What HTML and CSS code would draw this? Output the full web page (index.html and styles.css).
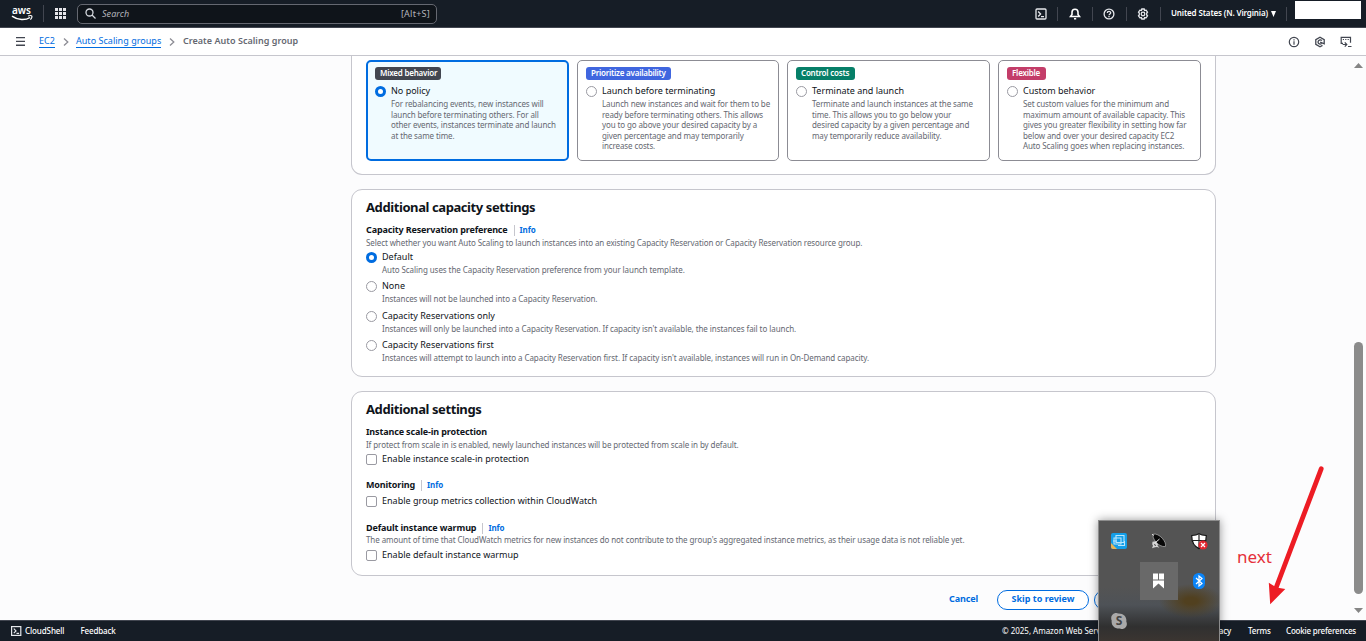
FILE: index.html
```html
<!DOCTYPE html>
<html lang="en">
<head>
<meta charset="utf-8">
<title>Create Auto Scaling group</title>
<link rel="stylesheet" href="styles.css">
</head>
<body>
<header class="topnav">
  <svg class="logo" width="22" height="18" viewBox="0 -2 22 18"><text x="0" y="6.700" class="logo-text" textLength="19" lengthAdjust="spacingAndGlyphs">aws</text><path d="M0 9.200c6 4.300 13.500 4.300 18 1.300" fill="none" stroke="#fff" stroke-width="1.500"/><path d="M16 9c1.800-.5 3.500-.5 3.800 0s-.2 2.300-1.400 3.600" fill="none" stroke="#fff" stroke-width="1.100"/></svg>
  <span class="sep sep-logo"></span>
  <svg class="grid-icon" width="11" height="11" viewBox="0 0 11 11" fill="#e6e6ea"><path d="M0 0h3v3H0zM4 0h3v3H4zM8 0h3v3H8zM0 4h3v3H0zM4 4h3v3H4zM8 4h3v3H8zM0 8h3v3H0zM4 8h3v3H4zM8 8h3v3H8z"/></svg>
  <div class="search">
    <svg width="11" height="11" viewBox="0 0 11 11" fill="none" stroke="#d5d9df" stroke-width="1.300"><circle cx="4.500" cy="4.500" r="3.500"/><path d="M7 7l3.500 3.500"/></svg>
    <span class="search-ph">Search</span><span class="search-key">[Alt+S]</span>
  </div>
  <div class="tools">
    <svg class="tool-shell" width="12" height="12" viewBox="0 0 12 12" fill="none" stroke="#e6e8ec" stroke-width="1.300"><rect x="1" y="1" width="10" height="10" rx="1"/><path d="M3.200 3.500L5.600 6 3.200 8.500M6 8.600h3"/></svg>
    <span class="sep"></span>
    <svg width="12" height="12" viewBox="0 0 12 12" fill="none" stroke="#fff" stroke-width="1.600"><path d="M1.500 8.500h9L9 6.500V4.300C9 2.500 7.700 1.300 6 1.300S3 2.500 3 4.300v2.200zM5 10.700h2.200"/></svg>
    <span class="sep"></span>
    <svg width="12" height="12" viewBox="0 0 12 12" fill="none" stroke="#e6e8ec" stroke-width="1.300"><circle cx="6" cy="6" r="4.900"/><path d="M4.300 4.900C4.300 3 7.700 3 7.700 4.800 7.700 6 6 5.900 6 7.300M6 8.100v1.100"/></svg>
    <span class="sep"></span>
    <svg width="12" height="12" viewBox="0 0 12 12" fill="none" stroke="#e6e8ec" stroke-width="1.300"><path d="M4.800 1h2.400l.4 1.400 1.500-.3 1.400 2L9.700 5v2l.8.9-1.400 2-1.500-.3L7.200 11H4.800l-.4-1.400-1.500.3-1.400-2 .8-.9V5l-.8-.9 1.400-2 1.500.3z"/><circle cx="6" cy="6" r="1.800"/></svg>
    <span class="sep"></span>
  </div>
  <span class="region">United States (N. Virginia)</span>
  <svg class="caret" width="5" height="6" viewBox="0 0 5 6" fill="#fff"><path d="M0 0h5L2.500 6z"/></svg>
  <span class="sep"></span>
  <span class="account"></span>
</header>
<nav class="crumbs">
  <svg class="menu" width="9" height="9" viewBox="0 0 9 9" fill="#424650"><path d="M0 0h9v1.300H0zM0 3.800h9v1.300H0zM0 7.600h9v1.300H0z"/></svg>
  <a class="crumb crumb-ec2">EC2</a>
  <svg class="chev" width="6" height="8" viewBox="0 0 6 8" fill="none" stroke="#8c8c94" stroke-width="1.300"><path d="M1 .5L4.800 4 1 7.500"/></svg>
  <a class="crumb crumb-asg">Auto Scaling groups</a>
  <svg class="chev" width="6" height="8" viewBox="0 0 6 8" fill="none" stroke="#8c8c94" stroke-width="1.300"><path d="M1 .5L4.800 4 1 7.500"/></svg>
  <span class="crumb-now">Create Auto Scaling group</span>
  <div class="crumb-tools">
    <svg width="12" height="12" viewBox="0 0 12 12" fill="none" stroke="#424650" stroke-width="1.200"><circle cx="6" cy="6" r="4.700"/><path d="M6 5.200v3.500M6 3.200v1.200"/></svg>
    <svg width="12" height="12" viewBox="0 0 12 12" fill="none" stroke="#424650" stroke-width="1.300"><path d="M8.500 9.400L6 10.800 1.800 8.400V3.600L6 1.200l4.200 2.400v4.200L6.200 6.100"/><path d="M7.800 4.700A2.100 2.100 0 1 0 7.700 7.400"/></svg>
    <svg width="12" height="12" viewBox="0 0 12 12" fill="none" stroke="#424650" stroke-width="1.200"><path d="M3 7.300H1.200V1.300h9.300v5.400M2.800 3.500h1.200M5.200 3.500h1.200M7.600 3.500h1.200M2.600 8.500h4M4.800 6.300L6.800 8.500 4.800 10.700M8 10.500h3.500"/></svg>
  </div>
</nav>
<main class="page">
  <section class="panel panel-tiles">
    <div class="tile selected">
      <span class="badge badge-mixed">Mixed behavior</span>
      <div class="tile-label"><i class="radio on"></i>No policy</div>
      <p class="tile-desc">For rebalancing events, new instances will<br>launch before terminating others. For all<br>other events, instances terminate and launch<br>at the same time.</p>
    </div>
    <div class="tile">
      <span class="badge badge-avail">Prioritize availability</span>
      <div class="tile-label"><i class="radio"></i>Launch before terminating</div>
      <p class="tile-desc">Launch new instances and wait for them to be<br>ready before terminating others. This allows<br>you to go above your desired capacity by a<br>given percentage and may temporarily<br>increase costs.</p>
    </div>
    <div class="tile">
      <span class="badge badge-cost">Control costs</span>
      <div class="tile-label"><i class="radio"></i>Terminate and launch</div>
      <p class="tile-desc">Terminate and launch instances at the same<br>time. This allows you to go below your<br>desired capacity by a given percentage and<br>may temporarily reduce availability.</p>
    </div>
    <div class="tile">
      <span class="badge badge-flex">Flexible</span>
      <div class="tile-label"><i class="radio"></i>Custom behavior</div>
      <p class="tile-desc">Set custom values for the minimum and<br>maximum amount of available capacity. This<br>gives you greater flexibility in setting how far<br>below and over your desired capacity EC2<br>Auto Scaling goes when replacing instances.</p>
    </div>
  </section>
  <section class="panel panel-capacity">
    <h2>Additional capacity settings</h2>
    <div class="field"><b>Capacity Reservation preference</b><a class="info">Info</a></div>
    <p class="desc">Select whether you want Auto Scaling to launch instances into an existing Capacity Reservation or Capacity Reservation resource group.</p>
    <div class="choices">
      <div class="choice"><i class="radio on"></i><span class="opt">Default</span><p class="desc">Auto Scaling uses the Capacity Reservation preference from your launch template.</p></div>
      <div class="choice"><i class="radio"></i><span class="opt">None</span><p class="desc">Instances will not be launched into a Capacity Reservation.</p></div>
      <div class="choice"><i class="radio"></i><span class="opt">Capacity Reservations only</span><p class="desc">Instances will only be launched into a Capacity Reservation. If capacity isn't available, the instances fail to launch.</p></div>
      <div class="choice"><i class="radio"></i><span class="opt">Capacity Reservations first</span><p class="desc">Instances will attempt to launch into a Capacity Reservation first. If capacity isn't available, instances will run in On-Demand capacity.</p></div>
    </div>
  </section>
  <section class="panel panel-settings">
    <h2>Additional settings</h2>
    <div class="field"><b>Instance scale-in protection</b></div>
    <p class="desc">If protect from scale in is enabled, newly launched instances will be protected from scale in by default.</p>
    <div class="check-row"><i class="check"></i><span class="opt">Enable instance scale-in protection</span></div>
    <div class="field field-next"><b>Monitoring</b><a class="info">Info</a></div>
    <div class="check-row check-gap"><i class="check"></i><span class="opt">Enable group metrics collection within CloudWatch</span></div>
    <div class="field field-last"><b>Default instance warmup</b><a class="info">Info</a></div>
    <p class="desc desc-last">The amount of time that CloudWatch metrics for new instances do not contribute to the group's aggregated instance metrics, as their usage data is not reliable yet.</p>
    <div class="check-row check-gap"><i class="check"></i><span class="opt">Enable default instance warmup</span></div>
  </section>
  <div class="actions"><a class="cancel">Cancel</a><a class="btn">Skip to review</a><a class="btn btn-prev">Previous</a></div>
  <div class="scrollbar">
    <svg width="9" height="5" viewBox="0 0 9 5" fill="#858585"><path d="M0 5L4.500 0 9 5z"/></svg>
    <span class="thumb"></span>
    <svg width="9" height="5" viewBox="0 0 9 5" fill="#858585"><path d="M0 0l4.500 5L9 0z"/></svg>
  </div>
</main>
<footer class="footer">
  <svg width="11" height="10" viewBox="0 0 11 10" fill="none" stroke="#e6e8ec" stroke-width="1.200"><rect x=".6" y=".6" width="9.200" height="8.800"/><path d="M2.800 2.600L5 4.900 2.800 7.200M5.500 7.300h2.600"/></svg>
  <span class="f-shell">CloudShell</span><span class="f-feed">Feedback</span>
  <span class="f-copy">© 2025, Amazon Web Services</span><span class="f-priv">Privacy</span><span class="f-terms">Terms</span><span class="f-cookie">Cookie preferences</span>
</footer>
<div class="tray">
  <span class="cell"><svg width="16" height="16" viewBox="0 0 16 16"><rect width="16" height="16" rx="2" fill="#149ee7"/><path d="M0 10l6 6H2a2 2 0 0 1-2-2z" fill="#e8b352"/><path d="M5 2.500h8v7H5zM3 5h7v6H3zM2 8h4M7 12.500h6.500V8" fill="none" stroke="#b9e6fb" stroke-width="1.100"/></svg></span>
  <span class="cell"><svg width="16" height="16" viewBox="0 0 16 16"><path d="M2.200 1.200C.6 5 7 14.200 14.300 13.600 16.500 9.500 8-.5 2.200 1.200z" fill="#080808" stroke="#a5a5a5" stroke-width=".8"/><path d="M1 1.200l2 1.300" stroke="#ddd"/><path d="M1.500 8.800l3-.6 2.500 3-.5 1.300 1.800 2.300-2.300-.8-2 .2-3 1 1-2.500-.8-1.500z" fill="#d5d5d5"/><path d="M4.500 9.500L8.500 6" stroke="#fff" stroke-width=".9"/><path d="M3 11.500l2 1" stroke="#444"/></svg></span>
  <span class="cell"><svg width="17" height="17" viewBox="0 0 17 17"><path d="M8 .6C10 2.200 12.500 2.500 15.200 2.500 15.500 9 13.500 13 8 15.600 2.500 13 .5 9 .8 2.500 3.500 2.500 6 2.200 8 .6z" fill="#fff" stroke="#111" stroke-width="1.200"/><path d="M8 1v14M1 7.500h14" stroke="#222" stroke-width="1.200"/><circle cx="12" cy="12" r="4.600" fill="#e32630"/><path d="M10 10l4 4M14 10l-4 4" stroke="#fff" stroke-width="1.200"/></svg></span>
  <span class="cell"></span>
  <span class="cell hover"><svg width="11" height="16" viewBox="0 0 11 16" fill="#fff"><path d="M0 .5h5v6H0zM6 .5h5v6H6zM0 7.500h11v8l-5.500-5-5.500 5z"/></svg></span>
  <span class="cell"><svg width="12" height="16" viewBox="0 0 12 16"><rect width="12" height="16" rx="5.500" fill="#0a84f8"/><path d="M3 5l6 5.500L6 13V3l3 2.500L3 11" fill="none" stroke="#fff" stroke-width="1.200"/></svg></span>
  <span class="cell"><svg width="16" height="16" viewBox="0 0 16 16"><path d="M5 0c1 0 1.500.3 2 .5C12.500 0 16 4 15.300 8.500 17.500 13 13 17.500 9 15.400 3.500 16 0 12 .7 7.500-1 3.500 2 0 5 0z" fill="#a9a9a9"/><text x="8" y="12.200" class="skype" text-anchor="middle">S</text></svg></span>
</div>
<div class="note">next</div>
<svg class="arrow" width="62" height="142" viewBox="1266 464 62 142"><path d="M1321.200 468.800L1276 588" stroke="#ed1c24" stroke-width="4.800" stroke-linecap="round"/><path d="M1270.200 604.300L1268.800 582.700 1276.500 587.500 1285.300 589z" fill="#ed1c24"/></svg>
</body>
</html>
```
FILE: styles.css
```css
* { box-sizing: border-box; }
body { margin: 0; width: 1366px; height: 641px; overflow: hidden; position: relative; font-family: "Noto Sans", "Open Sans", sans-serif; color: #0f141a; background: #fcfcfd; }
svg { display: block; flex: none; }
p, h2 { margin: 0; white-space: nowrap; }
span, a, b { white-space: nowrap; }

.topnav { height: 28px; background: #161d26; border-bottom: 1px solid #424650; display: flex; align-items: center; padding-left: 12px; color: #fff; }
.logo { overflow: visible; }
.logo-text { font: 600 10.500px "Noto Sans", sans-serif; fill: #fff; }
.sep { width: 1px; height: 14px; background: #424650; flex: none; }
.sep-logo { height: 17px; margin: 0 11px 0 9px; }
.search { width: 360px; height: 20px; margin-left: 11px; border: 1px solid #656871; border-radius: 5px; background: #0f141a; display: flex; align-items: center; padding: 0 6px 0 7px; }
.search-ph { font-size: 9px; font-style: italic; color: #b4b4bb; margin-left: 6px; letter-spacing: .05px; }
.search-key { font-size: 9px; color: #b4b4bb; margin-left: auto; letter-spacing: .25px; }
.tools { margin-left: auto; display: flex; align-items: center; gap: 10.600px; }
.region { width: 96px; margin-left: 10px; font-size: 8px; font-weight: 600; line-height: 12px; margin-top: -1px; letter-spacing: -.13px; }
.caret { margin: 0 10px 0 4px; }
.account { width: 66px; height: 18px; margin: -8px 5px 0 8px; background: #fff; }

.crumbs { height: 28px; background: #fff; border-bottom: 1px solid #c6c6cd; display: flex; align-items: center; padding: 0 14px 0 16px; font-size: 9px; }
.crumb { color: #006ce0; height: 12px; line-height: 10px; border-bottom: 1px solid #006ce0; }
.crumb-ec2 { margin-left: 14px; width: 16px; }
.crumb-asg { width: 85px; margin-left: -1px; letter-spacing: .03px; }
.chev { margin: 0 8px; }
.crumb-now { color: #656871; font-weight: 600; height: 12px; line-height: 10px; letter-spacing: .03px; }
.crumb-tools { margin-left: auto; display: flex; gap: 14px; }

.page { position: relative; height: 564px; overflow: hidden; }
.panel { width: 865px; margin: 0 0 14px 351px; padding: 8px 14px 0; background: #fff; border: 1px solid #c6c6cd; border-radius: 11px; }
.panel-tiles { height: 119px; padding: 4px 14px 0; border-top: 0; border-radius: 0 0 11px 11px; display: grid; grid-template-columns: 203px 202px 203px 203px; column-gap: 8px; }
.tile { height: 101px; border: 1px solid #8c8c94; border-radius: 5px; padding: 6px 0 0 8px; }
.tile.selected { border: 2px solid #006ce0; background: #f0fbff; padding: 5px 0 0 7px; }
.badge { display: block; height: 13px; line-height: 12px; border-radius: 3px; padding: 0 5px; color: #fff; font-size: 8px; font-weight: 600; letter-spacing: -.22px; }
.badge-mixed { background: #424650; width: 66px; }
.badge-avail { background: #4066df; width: 85px; }
.badge-cost { background: #067f68; width: 59px; }
.badge-flex { background: #c33d69; width: 39px; }
.tile-label { display: flex; align-items: center; height: 14px; margin-top: 3px; font-size: 9px; gap: 5px; }
.tile-label .radio { margin-top: 3px; }
.tile-desc { padding-left: 16px; margin-top: 2px; font-size: 8px; line-height: 10.550px; color: #656871; letter-spacing: -.11px; }
.radio { width: 11px; height: 11px; border: 1px solid #9a9aa2; border-radius: 50%; background: #fff; flex: none; }
.radio.on { border: 3.500px solid #006ce0; }

.panel-capacity { height: 188px; }
.panel-settings { height: 185px; }
h2 { font-size: 13px; line-height: 20px; height: 20px; margin-top: -1px; font-weight: 700; letter-spacing: -.41px; }
.field { display: flex; align-items: center; height: 14px; margin-top: 6px; font-size: 9px; line-height: 14px; }
.field b { font-weight: 700; letter-spacing: -.14px; }
.info { margin-left: 6px; padding-left: 5px; height: 11px; line-height: 10px; border-left: 1px solid #c6c6cd; color: #006ce0; font-weight: 700; font-size: 8px; letter-spacing: -.1px; }
.desc { font-size: 8px; line-height: 12px; color: #656871; letter-spacing: -.088px; }
.choices { display: grid; grid-auto-rows: 29.330px; margin-top: 1px; }
.choice { display: grid; grid-template-columns: 11px auto; column-gap: 5px; grid-template-rows: 14px 11px; align-items: center; justify-content: start; }
.choice .desc { grid-column: 2; line-height: 11px; letter-spacing: -.07px; }
.opt { font-size: 9px; line-height: 14px; letter-spacing: .01px; }
.choice .radio { margin-top: 1px; }
.check-row { display: flex; align-items: center; height: 14px; margin-top: 1px; gap: 5px; }
.check-gap { margin-top: 2px; }
.field-next { margin-top: 12px; }
.field-last { margin-top: 13px; }
.desc-last { margin-top: -1px; }
.check { width: 11px; height: 11px; margin-top: 1px; border: 1px solid #9a9aa2; border-radius: 2px; background: #fff; }

.actions { display: flex; align-items: center; height: 20px; padding-left: 949px; color: #006ce0; font-size: 9px; font-weight: 700; }
.cancel { width: 48px; height: 14px; line-height: 12px; letter-spacing: -.1px; }
.btn { width: 92px; height: 20px; line-height: 16px; border: 1.500px solid #006ce0; border-radius: 10px; background: #fff; text-align: center; }
.btn-prev { margin-left: 5px; }
.scrollbar { position: absolute; right: 3px; top: 7px; width: 9px; height: 550px; display: flex; flex-direction: column; }
.thumb { height: 252px; margin: 274px 0 14px; border-radius: 5px; background: #8b8b8b; }

.footer { height: 21px; background: #161d26; border-top: 1px solid #424650; display: flex; align-items: center; padding-left: 11px; color: #fff; font-size: 8px; line-height: 12px; font-weight: 500; }
.footer span { margin-top: -1px; }
.footer .f-shell { width: 55.500px; margin: 0 0 0 3px; letter-spacing: -.1px; }
.f-feed { letter-spacing: -.15px; }
.footer .f-copy { margin-left: auto; width: 203px; font-weight: 400; letter-spacing: -.02px; }
.f-priv { width: 43px; letter-spacing: -.2px; }
.f-terms { width: 38px; letter-spacing: -.1px; }
.f-cookie { width: 80px; letter-spacing: -.2px; }

.tray { position: absolute; left: 1098px; top: 520px; width: 122px; height: 121px; border: 1px solid #8c8c8c; border-bottom: 0; box-shadow: 0 0 9px rgba(0,0,0,.4); background: radial-gradient(ellipse 32px 17px at 92px 80px, #51401f 20%, transparent), linear-gradient(#545454 0 55%, #4e5257 70%, #303030 88%, #3b3531); padding: 1px; display: grid; grid-template-columns: repeat(3, 38px); grid-auto-rows: 38px; gap: 2px 2px; }
.cell { display: grid; place-items: center; }
.hover { background: #696969; }
.hover svg { margin-right: 2px; }
.skype { font: 700 12px "Noto Sans", sans-serif; fill: #444; }
.note { position: absolute; left: 1237px; top: 546px; font-size: 17px; line-height: 21px; color: #e5303a; }
.arrow { position: absolute; left: 1266px; top: 464px; }
```
